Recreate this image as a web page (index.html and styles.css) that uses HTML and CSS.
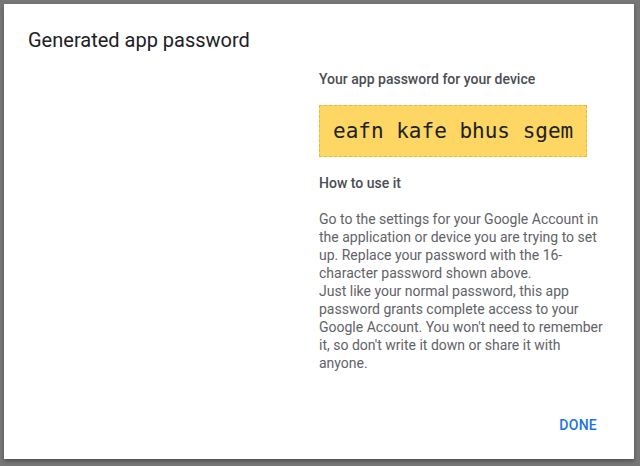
FILE: index.html
```html
<!DOCTYPE html>
<html lang="en">
<head>
    <meta charset="UTF-8">
    <title>Generated app password</title>
    <link rel="stylesheet" href="styles.css">
</head>
<body>
    <div class="dialog">
        <h1 class="dialog-title">Generated app password</h1>
        <div class="dialog-body">
            <div class="side"></div>
            <div class="info">
                <h2 class="label">Your app password for your device</h2>
                <div class="password-box">eafn kafe bhus sgem</div>
                <h2 class="label how">How to use it</h2>
                <p class="help">
                    Go to the settings for your Google Account in the application or device you are trying to set up. Replace your password with the 16-character password shown above.<br>
                    Just like your normal password, this app password grants complete access to your Google Account. You won't need to remember it, so don't write it down or share it with anyone.
                </p>
            </div>
        </div>
        <div class="dialog-actions">
            <button class="done-btn">Done</button>
        </div>
    </div>
</body>
</html>
```

FILE: styles.css
```css
html, body {
    height: 100%;
}
body {
    margin: 0;
    padding: 4px 6px 7px 4px;
    box-sizing: border-box;
    background-color: #777;
    font-family: Roboto, "Liberation Sans", Arial, sans-serif;
    display: flex;
}
.dialog {
    flex: 1;
    background-color: #fff;
    box-shadow: 0 2px 4px rgba(0, 0, 0, 0.35);
    padding: 24px 24px 16px 24px;
    display: flex;
    flex-direction: column;
}
.dialog-title {
    margin: 0;
    font-size: 20px;
    line-height: 24px;
    font-weight: 400;
    color: #202124;
}
.dialog-body {
    display: grid;
    grid-template-columns: 1fr 1fr;
    margin-top: 17px;
}
.label {
    margin: 0;
    font-size: 14px;
    line-height: 20px;
    font-weight: 500;
    color: #4a4d51;
}
.label.how {
    margin-top: 16px;
}
.password-box {
    display: inline-block;
    align-self: start;
    margin-top: 16px;
    padding: 12px 13px;
    background-color: #fdd663;
    border: 1px dashed #e8b73c;
    font-family: "DejaVu Sans Mono", "Liberation Mono", monospace;
    font-size: 21px;
    line-height: 26px;
    color: #202124;
}
.info {
    display: flex;
    flex-direction: column;
    align-items: flex-start;
}
.help {
    margin: 17px 0 0 0;
    font-size: 14px;
    line-height: 18px;
    color: #5f6368;
}
.dialog-actions {
    margin-top: auto;
    display: flex;
    justify-content: flex-end;
}
.done-btn {
    height: 36px;
    margin-right: 5px;
    padding: 0 8px;
    border: none;
    background: none;
    font-family: Roboto, "Liberation Sans", Arial, sans-serif;
    font-size: 14px;
    font-weight: 500;
    letter-spacing: 0.25px;
    text-transform: uppercase;
    color: #1a73e8;
    cursor: pointer;
}
```
